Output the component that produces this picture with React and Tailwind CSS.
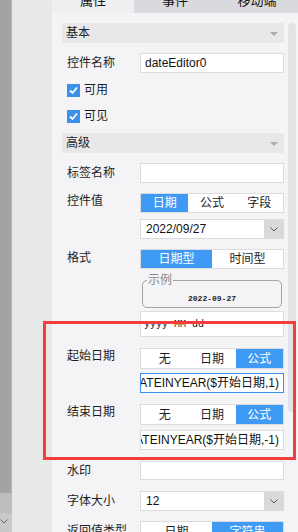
import React from "react";

const FONT = { fontFamily: '"Liberation Sans", "Noto Sans CJK SC", sans-serif' };
const BLUE = "bg-[#3f9af5]";

function Header({ text }) {
  return (
    <div className="h-[20px] bg-[#e8e8ea] flex items-center justify-between pl-[4px] pr-[6px]">
      <span className="text-[12px] leading-[12px] text-[#1e1e1e]">{text}</span>
      <svg width="8" height="4" viewBox="0 0 8 4" className="mt-[1px]">
        <path d="M0 0 L8 0 L4 4 Z" fill="#ababad" />
      </svg>
    </div>
  );
}

function Label({ children, cls = "" }) {
  return (
    <div className={"w-[78px] shrink-0 pl-[5px] h-[20px] flex items-center text-[12px] text-[#1e1e1e] " + cls}>
      {children}
    </div>
  );
}

function Seg({ items, active, h = "h-[21px]" }) {
  return (
    <div className={"flex border border-[#dcdcdf] bg-white " + h}>
      {items.map((t, i) => (
        <div
          key={i}
          className={
            "flex-1 flex items-center justify-center text-[12px] " +
            (i === active ? BLUE + " text-white" : "text-[#1e1e1e]")
          }
        >
          {t}
        </div>
      ))}
    </div>
  );
}

function Input({ children, h = "h-[20px]", cls = "" }) {
  return (
    <div className={"bg-white border border-[#dcdcdf] flex items-center text-[12px] text-[#111] " + h + " " + cls}>
      {children}
    </div>
  );
}

function Chevron() {
  return (
    <svg width="8" height="5" viewBox="0 0 8 5">
      <path d="M0.5 0.5 L4 4 L7.5 0.5" fill="none" stroke="#555" strokeWidth="1" />
    </svg>
  );
}

function Select({ value }) {
  return (
    <div className="h-[20px] bg-white border border-[#dcdcdf] flex text-[12px] text-[#111]">
      <div className="flex-1 flex items-center pl-[5px]">{value}</div>
      <div className="w-[19px] bg-[#d9d9dc] flex items-center justify-center">
        <Chevron />
      </div>
    </div>
  );
}

function Check({ text }) {
  return (
    <div className="h-[20px] flex items-center pl-[5px] text-[12px] text-[#1e1e1e]">
      <div className="w-[13px] h-[13px] bg-[#3b90ec] flex items-center justify-center">
        <svg width="11" height="11" viewBox="0 0 11 11">
          <path d="M2 5.5 L4.5 8 L9 2.5" fill="none" stroke="white" strokeWidth="1.8" />
        </svg>
      </div>
      <span className="ml-[4px]">{text}</span>
    </div>
  );
}

function Formula({ text, focused }) {
  return (
    <div
      className={
        "h-[20px] w-[144px] bg-white border flex items-center text-[12px] text-[#111] pr-[4px] overflow-hidden " +
        (focused ? "border-[#3b8ef0]" : "border-[#dcdcdf]")
      }
    >
      <div className="flex-1 min-w-0 overflow-hidden flex justify-end">
        <span className="shrink-0 whitespace-nowrap">{text}</span>
      </div>
    </div>
  );
}

export default function App() {
  return (
    <div className="relative w-[298px] h-[532px] overflow-hidden flex bg-[#e8e8e8]" style={FONT}>
      {/* left strip */}
      <div className="w-[12px] shrink-0 flex flex-col">
        <div className="h-[493px] shrink-0 bg-[#a3a3a3] border-r border-[#b4b4b4]" />
        <div className="h-[20px] shrink-0 bg-[#bdbdbd]" />
        <div className="flex-1 bg-[#c9c9c9] flex items-start pt-[6px]">
          <svg width="8" height="5" viewBox="0 0 8 5">
            <path d="M0.5 0.5 L4 4 L7.5 0.5" fill="none" stroke="#666" strokeWidth="1" />
          </svg>
        </div>
      </div>
      <div className="w-[40px] shrink-0 bg-[#e8e8e8]" />
      {/* panel */}
      <div className="w-[246px] shrink-0 bg-[#f4f4f6] flex flex-col">
        <div className="h-[13px] shrink-0 flex overflow-hidden text-[13px] text-[#111]">
          <div className="w-[82px] bg-[#efeff1] flex justify-center items-start">
            <span className="-mt-[6px] leading-[14px]">属性</span>
          </div>
          <div className="w-[82px] bg-[#dadade] flex justify-center items-start">
            <span className="-mt-[6px] leading-[14px]">事件</span>
          </div>
          <div className="w-[82px] bg-[#dadade] flex justify-center items-start">
            <span className="-mt-[6px] leading-[14px]">移动端</span>
          </div>
        </div>
        <div className="flex shrink-0">
          <div className="w-[222px] ml-[10px] flex flex-col">
            <div className="mt-[10px]">
              <Header text="基本" />
            </div>
            <div className="mt-[10px] flex">
              <Label>控件名称</Label>
              <Input cls="flex-1 pl-[4px]">dateEditor0</Input>
            </div>
            <div className="mt-[7px]">
              <Check text="可用" />
            </div>
            <div className="mt-[6px]">
              <Check text="可见" />
            </div>
            <div className="mt-[7px]">
              <Header text="高级" />
            </div>
            <div className="mt-[10px] flex">
              <Label>标签名称</Label>
              <Input cls="flex-1" />
            </div>
            <div className="mt-[10px] flex">
              <Label cls="-mt-[2px]">控件值</Label>
              <div className="flex-1 min-w-0 flex flex-col">
                <Seg items={["日期", "公式", "字段"]} active={0} h="h-[20px]" />
                <div className="mt-[6px]">
                  <Select value="2022/09/27" />
                </div>
              </div>
            </div>
            <div className="mt-[10px] flex">
              <Label cls="-mt-[1px]">格式</Label>
              <div className="flex-1 min-w-0 flex flex-col">
                <Seg items={["日期型", "时间型"]} active={0} h="h-[20px]" />
                <fieldset className="mt-[5px] mx-[2px] h-[34px] border border-[#a4a4a4] rounded-[5px] px-0 flex items-center justify-center">
                  <legend className="ml-[4px] px-[1px] text-[12px] leading-[12px] text-[#8a8a8a]">示例</legend>
                  <div className="w-full h-[26px] flex items-center justify-center text-[8px] font-bold text-[#222]" style={{ fontFamily: '"Liberation Mono", monospace' }}>
                    2022-09-27
                  </div>
                </fieldset>
                <div className="mt-[3px]">
                  <Input h="h-[26px]" cls="pl-[3px]">
                    <span className="text-[10px] text-[#111]" style={{ fontFamily: '"Liberation Mono", monospace' }}>
                      yyyy MM dd
                    </span>
                  </Input>
                </div>
              </div>
            </div>
            <div className="mt-[11px] flex">
              <Label cls="-mt-[2px]">起始日期</Label>
              <div className="flex-1 min-w-0 flex flex-col">
                <Seg items={["无", "日期", "公式"]} active={2} />
                <div className="mt-[4px]">
                  <Formula text="=DATEINYEAR($开始日期,1)" focused />
                </div>
              </div>
            </div>
            <div className="mt-[11px] flex">
              <Label cls="-mt-[2px]">结束日期</Label>
              <div className="flex-1 min-w-0 flex flex-col">
                <Seg items={["无", "日期", "公式"]} active={2} />
                <div className="mt-[5px]">
                  <Formula text="=DATEINYEAR($开始日期,-1)" />
                </div>
              </div>
            </div>
            <div className="mt-[11px] flex">
              <Label>水印</Label>
              <Input h="h-[19px]" cls="flex-1" />
            </div>
            <div className="mt-[10px] flex">
              <Label>字体大小</Label>
              <div className="flex-1 min-w-0">
                <Select value="12" />
              </div>
            </div>
            <div className="mt-[10px] flex">
              <Label>返回值类型</Label>
              <div className="flex-1 min-w-0">
                <Seg items={["日期", "字符串"]} active={1} />
              </div>
            </div>
          </div>
          <div className="ml-[4px] mt-[10px] w-[8px] h-[389px] rounded-[4px] bg-[#e3e3e5]" />
        </div>
      </div>
      {/* annotation */}
      <div className="absolute left-[43px] top-[321px] w-[253px] h-[139px] border-[3px] border-[#f53d3d] pointer-events-none" />
    </div>
  );
}
